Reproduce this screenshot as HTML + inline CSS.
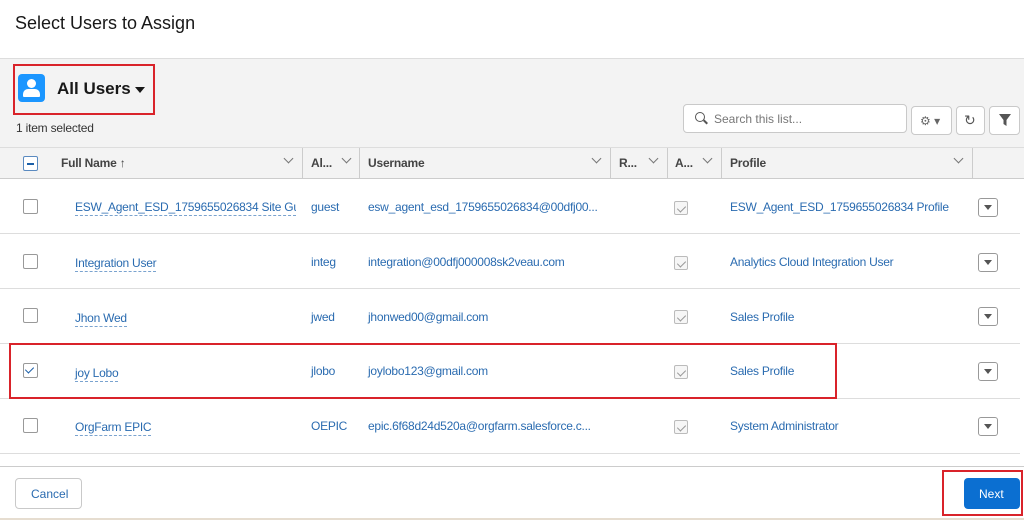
<!DOCTYPE html>
<html><head><style>
*{box-sizing:border-box;margin:0;padding:0}
body{width:1024px;height:520px;overflow:hidden;background:#fff;font-family:"Liberation Sans",sans-serif;color:#181818;position:relative}
.abs{position:absolute}
.title{left:15px;top:13px;font-size:18px;color:#181818}
.band{left:0;top:58px;width:1024px;height:90px;background:#f3f3f3;border-top:1px solid #ddd}
.hdr{left:0;top:147px;width:1024px;height:32px;background:#f3f3f3;border-top:1px solid #ddd;border-bottom:1px solid #ccc}
.h{top:156px;font-size:12px;font-weight:bold;color:#444;letter-spacing:-0.2px}
.sep{top:148px;width:1px;height:30px;background:#ccc}
.chev{top:155px;width:7px;height:7px;border-right:1.2px solid #777;border-bottom:1.2px solid #777;transform:rotate(45deg)}
.row{left:0;width:1020px;height:55px;border-bottom:1px solid #ddd}
.cb{width:15px;height:15px;border:1px solid #999;border-radius:2px;background:#fff}
.lnk{font-size:12px;color:#2a6bb0;border-bottom:1px dashed #7aa3cf;padding-bottom:1px;letter-spacing:-0.25px}
.txt{font-size:12px;color:#2a6bb0;letter-spacing:-0.25px}
.gc{width:14px;height:14px;border:1px solid #bbb;border-radius:2px;background:#f6f6f6}
.gc:after{content:"";position:absolute;left:3.5px;top:1.5px;width:4px;height:7px;border-right:1.5px solid #999;border-bottom:1.5px solid #999;transform:rotate(45deg)}
.dd{width:20px;height:19px;border:1px solid #999;border-radius:3px;background:#fff}
.dd:after{content:"";position:absolute;left:5px;top:6px;border-left:4px solid transparent;border-right:4px solid transparent;border-top:5px solid #555}
.red{border:2.5px solid #d9232a}
.btn{border:1px solid #c9c9c9;border-radius:4px;background:#fff}
</style></head><body>
<div class="abs title">Select Users to Assign</div>
<div class="abs band"></div>
<div class="abs" style="left:18px;top:74px;width:27px;height:28px;background:#1b96ff;border-radius:4px"></div>
<div class="abs" style="left:27px;top:79px;width:9px;height:9px;border-radius:50%;background:#fff"></div>
<div class="abs" style="left:23px;top:89px;width:17px;height:8px;border-radius:5px 5px 1px 1px;background:#fff"></div>
<div class="abs" style="left:57px;top:79px;font-size:17px;font-weight:bold">All Users</div>
<div class="abs" style="left:135px;top:87px;border-left:5px solid transparent;border-right:5px solid transparent;border-top:6px solid #181818"></div>
<div class="abs red" style="left:13px;top:64px;width:142px;height:51px"></div>
<div class="abs" style="left:16px;top:121px;font-size:12px;color:#333;letter-spacing:-0.2px">1 item selected</div>
<div class="abs btn" style="left:683px;top:104px;width:224px;height:29px"></div>
<div class="abs" style="left:695px;top:112px;width:10px;height:10px;border:1.8px solid #555;border-radius:50%"></div>
<div class="abs" style="left:703px;top:121px;width:5px;height:2px;background:#555;transform:rotate(45deg)"></div>
<div class="abs" style="left:714px;top:112px;font-size:12px;color:#777">Search this list...</div>
<div class="abs btn" style="left:911px;top:106px;width:41px;height:29px"></div>
<div class="abs" style="left:920px;top:114px;font-size:12px;color:#666">⚙ ▾</div>
<div class="abs btn" style="left:956px;top:106px;width:29px;height:29px"></div>
<div class="abs" style="left:964px;top:112px;font-size:14px;color:#555">↻</div>
<div class="abs btn" style="left:989px;top:106px;width:31px;height:29px"></div>
<svg class="abs" style="left:998px;top:113px" width="14" height="14" viewBox="0 0 14 14"><path d="M1 1h12L8.5 7v6L5.5 11V7z" fill="#555"/></svg>

<div class="abs hdr"></div>
<div class="abs" style="left:23px;top:156px;width:15px;height:15px;border:1px solid #5a8ac0;border-radius:2px;background:#fff"></div>
<div class="abs" style="left:27px;top:163px;width:7px;height:2px;background:#1b5fa8"></div>
<div class="abs h" style="left:61px">Full Name <span style="font-weight:normal">↑</span></div>
<div class="abs chev" style="left:285px"></div><div class="abs sep" style="left:302px"></div>
<div class="abs h" style="left:311px">Al...</div><div class="abs chev" style="left:343px"></div><div class="abs sep" style="left:359px"></div>
<div class="abs h" style="left:368px">Username</div><div class="abs chev" style="left:593px"></div><div class="abs sep" style="left:610px"></div>
<div class="abs h" style="left:619px">R...</div><div class="abs chev" style="left:650px"></div><div class="abs sep" style="left:667px"></div>
<div class="abs h" style="left:675px">A...</div><div class="abs chev" style="left:704px"></div><div class="abs sep" style="left:721px"></div>
<div class="abs h" style="left:730px">Profile</div><div class="abs chev" style="left:955px"></div><div class="abs sep" style="left:972px"></div>

<div class="abs row" style="top:179px"></div>
<div class="abs row" style="top:234px"></div>
<div class="abs row" style="top:289px"></div>
<div class="abs row" style="top:344px"></div>
<div class="abs row" style="top:399px"></div>
<div class="abs" style="left:0;top:466px;width:1024px;height:1px;background:#ccc"></div>

<div class="abs cb" style="left:23px;top:199px"></div>
<div class="abs lnk" style="left:75px;top:200px;width:221px;white-space:nowrap;overflow:hidden">ESW_Agent_ESD_1759655026834 Site Guest</div>
<div class="abs txt" style="left:311px;top:200px">guest</div>
<div class="abs txt" style="left:368px;top:200px">esw_agent_esd_1759655026834@00dfj00...</div>
<div class="abs gc" style="left:674px;top:201px"></div>
<div class="abs txt" style="left:730px;top:200px">ESW_Agent_ESD_1759655026834 Profile</div>
<div class="abs dd" style="left:978px;top:198px"></div>

<div class="abs cb" style="left:23px;top:254px"></div>
<div class="abs lnk" style="left:75px;top:256px">Integration User</div>
<div class="abs txt" style="left:311px;top:255px">integ</div>
<div class="abs txt" style="left:368px;top:255px">integration@00dfj000008sk2veau.com</div>
<div class="abs gc" style="left:674px;top:256px"></div>
<div class="abs txt" style="left:730px;top:255px">Analytics Cloud Integration User</div>
<div class="abs dd" style="left:978px;top:253px"></div>

<div class="abs cb" style="left:23px;top:308px"></div>
<div class="abs lnk" style="left:75px;top:311px">Jhon Wed</div>
<div class="abs txt" style="left:311px;top:310px">jwed</div>
<div class="abs txt" style="left:368px;top:310px">jhonwed00@gmail.com</div>
<div class="abs gc" style="left:674px;top:310px"></div>
<div class="abs txt" style="left:730px;top:310px">Sales Profile</div>
<div class="abs dd" style="left:978px;top:307px"></div>

<div class="abs cb" style="left:23px;top:363px"></div>
<div class="abs" style="left:27px;top:365px;width:5px;height:8px;border-right:1.6px solid #1b5fa8;border-bottom:1.6px solid #1b5fa8;transform:rotate(45deg)"></div>
<div class="abs lnk" style="left:75px;top:366px">joy Lobo</div>
<div class="abs txt" style="left:311px;top:364px">jlobo</div>
<div class="abs txt" style="left:368px;top:364px">joylobo123@gmail.com</div>
<div class="abs gc" style="left:674px;top:365px"></div>
<div class="abs txt" style="left:730px;top:364px">Sales Profile</div>
<div class="abs dd" style="left:978px;top:362px"></div>
<div class="abs red" style="left:9px;top:343px;width:828px;height:56px"></div>

<div class="abs cb" style="left:23px;top:418px"></div>
<div class="abs lnk" style="left:75px;top:420px">OrgFarm EPIC</div>
<div class="abs txt" style="left:311px;top:419px">OEPIC</div>
<div class="abs txt" style="left:368px;top:419px">epic.6f68d24d520a@orgfarm.salesforce.c...</div>
<div class="abs gc" style="left:674px;top:420px"></div>
<div class="abs txt" style="left:730px;top:419px">System Administrator</div>
<div class="abs dd" style="left:978px;top:417px"></div>

<div class="abs" style="left:0;top:467px;width:1024px;height:53px;background:#fff;border-bottom:2px solid #e6ddd0"></div>
<div class="abs btn" style="left:15px;top:478px;width:67px;height:31px"></div>
<div class="abs" style="left:31px;top:487px;font-size:12px;color:#2a6bb0">Cancel</div>
<div class="abs" style="left:964px;top:478px;width:56px;height:31px;background:#0b6fd1;border-radius:4px"></div>
<div class="abs" style="left:979px;top:487px;font-size:12px;color:#fff">Next</div>
<div class="abs red" style="left:942px;top:470px;width:81px;height:46px"></div>
</body></html>
